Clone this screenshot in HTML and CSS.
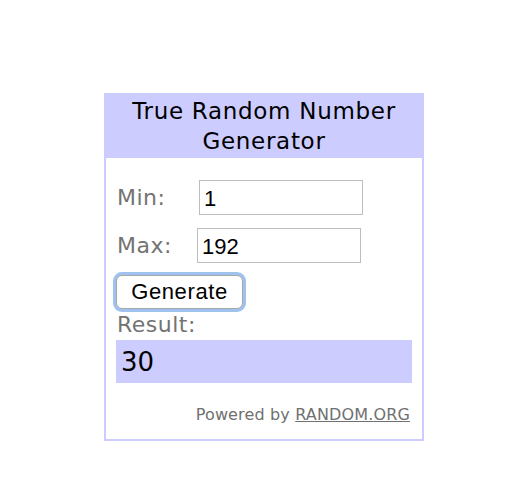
FILE: index.html
```html
<!DOCTYPE html>
<html>
<head>
<meta charset="utf-8">
<link rel="stylesheet" href="styles.css">
</head>
<body>
<div class="page">
  <div class="widget">
    <div class="title">True Random Number<br>Generator</div>
    <div class="content">
      <div class="row"><span class="label label-min">Min:</span><input class="field" type="text" value="1"></div>
      <div class="row"><span class="label label-max">Max:</span><input class="field" type="text" value="192"></div>
      <button class="btn">Generate</button>
      <div class="label result-label">Result:</div>
      <div class="result">30</div>
      <div class="powered">Powered by <a class="link" href="#">RANDOM.ORG</a></div>
    </div>
  </div>
</div>
</body>
</html>
```
FILE: styles.css
```css
html, body {
  margin: 0;
  padding: 0;
  background: #ffffff;
}
.page {
  padding: 93px 0 0 104px;
}
.widget {
  width: 316px;
  border: 2px solid #ccccff;
  font-family: "DejaVu Sans", Verdana, sans-serif;
  background: #ffffff;
}
.title {
  background: #ccccff;
  text-align: center;
  font-size: 23px;
  line-height: 30px;
  letter-spacing: 0.7px;
  color: #000000;
  padding: 1px 0 2px 0;
}
.content {
  padding: 22px 10px 14px 10px;
}
.row {
  display: flex;
  align-items: center;
  height: 35px;
  margin-bottom: 13px;
}
.label {
  font-size: 22px;
  color: #737373;
  line-height: 26px;
  letter-spacing: 0.5px;
}
.label-min {
  margin-left: 1px;
  width: 82px;
}
.label-max {
  margin-left: 1px;
  width: 80px;
}
.field {
  box-sizing: border-box;
  width: 164px;
  height: 35px;
  border: 1px solid #bdbdbd;
  padding: 2px 4px 0 4px;
  font-family: "Liberation Sans", Arial, sans-serif;
  font-size: 22px;
  color: #000000;
  margin: 0;
  outline: none;
}
.btn {
  display: block;
  box-sizing: border-box;
  width: 127px;
  height: 34px;
  margin: -1px 0 0 0;
  padding: 0;
  background: #ffffff;
  border: 1px solid #a8a8a8;
  border-radius: 6px;
  box-shadow: 0 0 0 3px #9fc3ee;
  font-family: "Liberation Sans", Arial, sans-serif;
  font-size: 22px;
  letter-spacing: 0.6px;
  color: #000000;
}
.result-label {
  margin-top: 3px;
  margin-left: 1px;
}
.result {
  margin-top: 2px;
  background: #ccccff;
  height: 43px;
  line-height: 45px;
  font-size: 26px;
  color: #000000;
  padding-left: 5px;
}
.powered {
  margin-top: 22px;
  text-align: right;
  font-size: 16px;
  line-height: 20px;
  letter-spacing: 0.15px;
  color: #707070;
  padding-right: 2px;
}
.link {
  color: #707070;
  text-decoration: underline;
}
```
